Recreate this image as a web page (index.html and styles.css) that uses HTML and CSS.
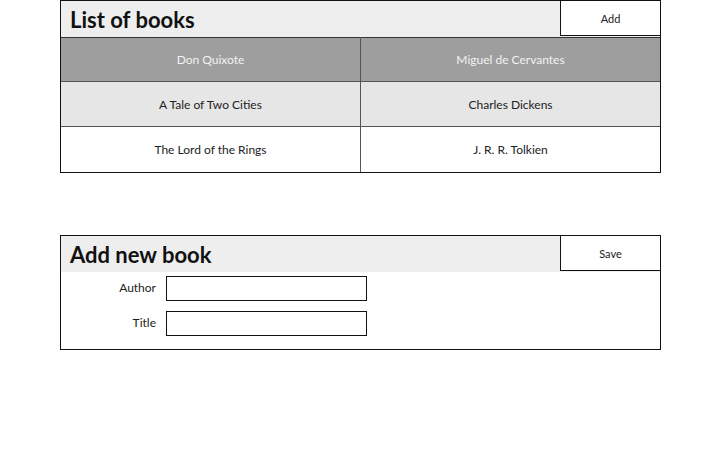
FILE: index.html
```html
<!DOCTYPE html>
<html>
<head>
<meta charset="utf-8">
<link rel="stylesheet" href="styles.css">
</head>
<body>
<section class="panel">
  <div class="panel-head">
    <h1 class="panel-title">List of books</h1>
    <button class="btn">Add</button>
  </div>
  <table class="books">
    <tr class="row-head"><td>Don Quixote</td><td>Miguel de Cervantes</td></tr>
    <tr class="row-alt"><td>A Tale of Two Cities</td><td>Charles Dickens</td></tr>
    <tr class="row-plain"><td>The Lord of the Rings</td><td>J. R. R. Tolkien</td></tr>
  </table>
</section>
<section class="panel panel-form">
  <div class="panel-head">
    <h1 class="panel-title">Add new book</h1>
    <button class="btn">Save</button>
  </div>
  <form class="form">
    <label class="form-label" for="author">Author</label>
    <input class="form-input" id="author" type="text">
    <label class="form-label" for="title">Title</label>
    <input class="form-input" id="title" type="text">
  </form>
</section>
</body>
</html>
```
FILE: styles.css
```css
html, body {
  margin: 0;
  padding: 0;
  background: #fff;
}
body {
  font-family: Lato, "Liberation Sans", sans-serif;
  color: #222;
}
.panel {
  box-sizing: border-box;
  width: 601px;
  margin-left: 60px;
  border: 1px solid #111;
}
.panel-form {
  margin-top: 62px;
}
.panel-head {
  display: flex;
  align-items: flex-start;
  height: 36px;
  background: #eeeeee;
}
.panel-title {
  flex: 1;
  margin: 0;
  padding: 7px 0 0 9px;
  font-size: 22px;
  font-weight: bold;
  line-height: 24px;
  color: #111;
}
.btn {
  box-sizing: border-box;
  width: 101px;
  height: 36px;
  margin: -1px -1px 0 0;
  background: #fff;
  border: 1px solid #111;
  font-family: inherit;
  font-size: 11px;
  color: #222;
  padding: 0;
}
.books {
  width: 100%;
  border-collapse: collapse;
  table-layout: fixed;
}
.books td {
  border: 1px solid #555;
  text-align: center;
  font-size: 12px;
  height: 43px;
  padding: 0;
}
.books tr td + td { border-left: 1px solid #777; }
.books tr:first-child td { border-top-color: #333; }
.books tr td:first-child { border-left: none; }
.books tr td:last-child { border-right: none; }
.books tr:last-child td { border-bottom: none; }
.row-head td {
  background: #9e9e9e;
  color: #f2f2f2;
}
.row-alt td {
  background: #e6e6e6;
  color: #222;
  height: 44px;
}
.row-plain td {
  background: #fff;
  color: #222;
  height: 45px;
}
.form {
  display: grid;
  grid-template-columns: 95px 201px;
  column-gap: 10px;
  row-gap: 10px;
  align-items: center;
  padding: 4px 0 13px 0;
  margin: 0;
}
.form-label {
  text-align: right;
  font-size: 12px;
  color: #222;
  margin-top: -2px;
}
.form-input {
  box-sizing: border-box;
  width: 201px;
  height: 25px;
  margin: 0;
  border: 1px solid #111;
  background: #fff;
  padding: 0;
}
```
